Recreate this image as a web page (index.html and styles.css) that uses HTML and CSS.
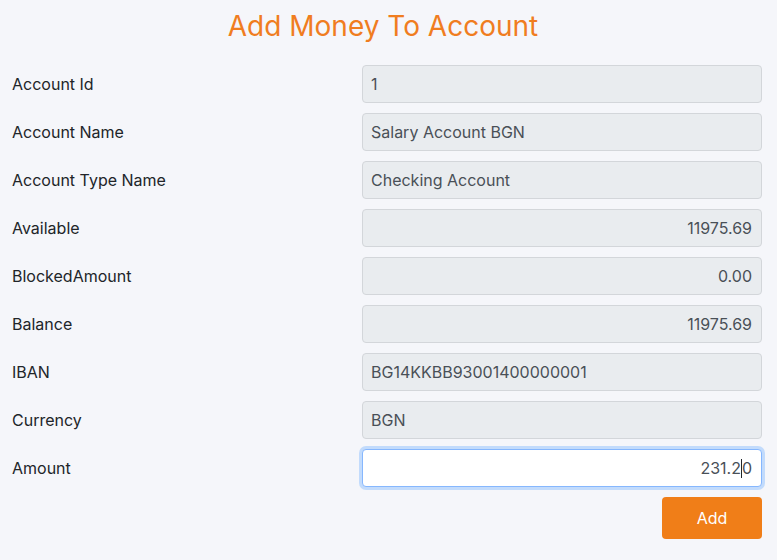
FILE: index.html
```html
<!DOCTYPE html>
<html>
<head>
<meta charset="utf-8">
<link rel="stylesheet" href="styles.css">
</head>
<body>
<div class="page">
  <h1 class="title">Add Money To Account</h1>
  <form class="form">
    <div class="row"><label class="label">Account Id</label><input class="field" value="1" readonly></div>
    <div class="row"><label class="label">Account Name</label><input class="field" value="Salary Account BGN" readonly></div>
    <div class="row"><label class="label">Account Type Name</label><input class="field" value="Checking Account" readonly></div>
    <div class="row"><label class="label">Available</label><input class="field num" value="11975.69" readonly></div>
    <div class="row"><label class="label">BlockedAmount</label><input class="field num" value="0.00" readonly></div>
    <div class="row"><label class="label">Balance</label><input class="field num" value="11975.69" readonly></div>
    <div class="row"><label class="label">IBAN</label><input class="field" value="BG14KKBB93001400000001" readonly></div>
    <div class="row"><label class="label">Currency</label><input class="field" value="BGN" readonly></div>
    <div class="row"><label class="label">Amount</label><div class="field num active">231.2<span class="caret"></span>0</div></div>
    <div class="actions"><button type="button" class="btn">Add</button></div>
  </form>
</div>
</body>
</html>
```
FILE: styles.css
```css
html, body {
  margin: 0;
  padding: 0;
  background: #f5f6fa;
}
body {
  font-family: Inter, "Noto Sans", sans-serif;
  color: #212529;
  font-size: 16px;
}
.page {
  width: 750px;
  padding: 0 15px 0 12px;
}
.title {
  margin: 0;
  padding: 9px 8px 0 0;
  height: 65px;
  box-sizing: border-box;
  font-size: 28px;
  font-weight: 400;
  line-height: 34px;
  color: #f07d1f;
  text-align: center;
}
.form {
  display: flex;
  flex-direction: column;
  gap: 10px;
}
.row {
  display: grid;
  grid-template-columns: 350px 400px;
  align-items: center;
  height: 38px;
}
.label {
  font-size: 16px;
}
.field {
  box-sizing: border-box;
  height: 38px;
  width: 400px;
  padding: 0 9px 0 8px;
  border: 1px solid #d3d6da;
  border-radius: 4px;
  background: #e9ecef;
  color: #495057;
  font-family: Inter, "Noto Sans", sans-serif;
  font-size: 16px;
  outline: none;
  display: flex;
  align-items: center;
}
.num {
  text-align: right;
  justify-content: flex-end;
}
.active {
  background: #fff;
  border-color: #86b7fe;
  box-shadow: 0 0 0 3px #c2dbfc;
}
.caret {
  display: inline-block;
  width: 1px;
  height: 19px;
  background: #212529;
}
.actions {
  display: flex;
  justify-content: flex-end;
}
.btn {
  width: 100px;
  height: 42px;
  border: none;
  border-radius: 4px;
  background: #f07e18;
  color: #fff;
  font-family: Inter, "Noto Sans", sans-serif;
  font-size: 16px;
}
```
